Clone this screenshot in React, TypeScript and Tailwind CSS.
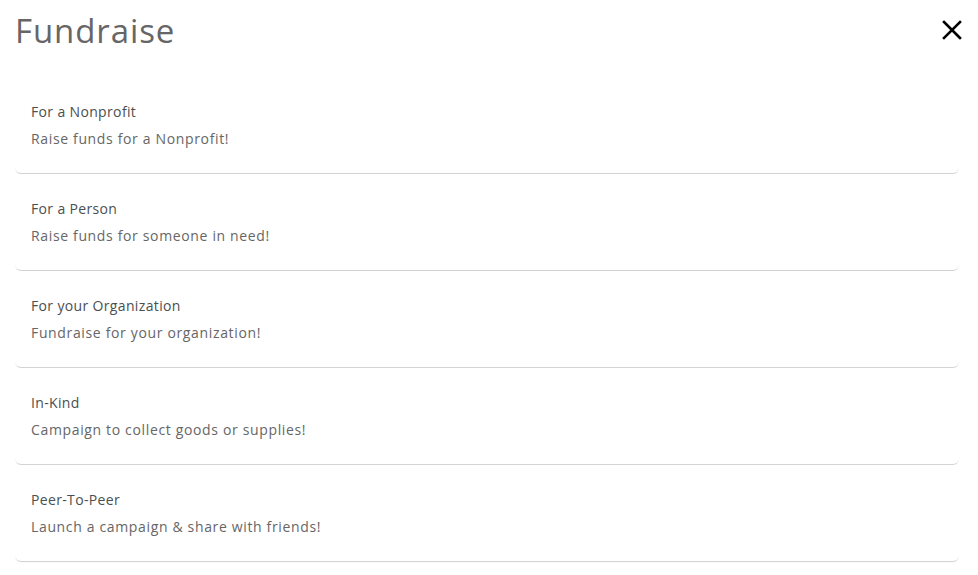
import React from "react";

const items = [
  { t: "For a Nonprofit", s: "Raise funds for a Nonprofit!" },
  { t: "For a Person", s: "Raise funds for someone in need!" },
  { t: "For your Organization", s: "Fundraise for your organization!" },
  { t: "In-Kind", s: "Campaign to collect goods or supplies!" },
  { t: "Peer-To-Peer", s: "Launch a campaign & share with friends!" },
];

export default function App() {
  return (
    <div className="w-[978px] h-[575px] bg-white overflow-hidden" style={{ fontFamily: '"Open Sans", "Noto Sans", sans-serif' }}>
      <div className="flex items-center justify-between h-[60px] pl-[15px] pr-[15px]">
        <h1 className="text-[33px] leading-none text-[#666666] tracking-[0.9px]">Fundraise</h1>
        <button className="w-[22px] h-[22px] flex items-center justify-center">
          <svg width="20" height="20" viewBox="0 0 20 20">
            <path d="M2 2 L18 18 M18 2 L2 18" stroke="#000" strokeWidth="2.6" strokeLinecap="square" />
          </svg>
        </button>
      </div>
      <div className="flex flex-col gap-[1px] px-[15px] pt-[17px] pr-[19px]">
        {items.map((it) => (
          <div
            key={it.t}
            className="h-[96px] rounded-[6px] bg-white pl-[16px] pt-[25px] shadow-[0_2px_1px_-1px_rgba(0,0,0,0.14),0_1px_1px_0_rgba(0,0,0,0.06)]"
          >
            <div className="text-[14px] leading-[20px] font-medium tracking-[0.35px] text-[#4a4f4f]">{it.t}</div>
            <div className="text-[14px] leading-[20px] mt-[7px] tracking-[0.65px] text-[#666666]">{it.s}</div>
          </div>
        ))}
      </div>
    </div>
  );
}
